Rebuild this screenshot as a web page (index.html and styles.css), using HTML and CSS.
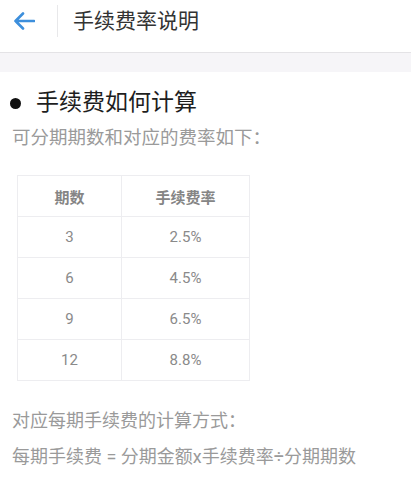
FILE: index.html
```html
<!DOCTYPE html>
<html lang="zh-CN">
<head>
  <meta charset="UTF-8" />
  <meta name="viewport" content="width=device-width, initial-scale=1.0" />
  <title>手续费率说明</title>
  <link rel="stylesheet" href="styles.css">
</head>
<body>
  <!-- 顶部导航 -->
  <div class="topbar">
    <span class="back">
      <svg width="22" height="18" viewBox="0 0 22 18">
        <path d="M21 9H2.5M10 1.5L2.5 9l7.5 7.5" fill="none" stroke="#3d8fdc" stroke-width="2.6" stroke-linecap="round" stroke-linejoin="round"/>
      </svg>
    </span>
    <span class="divider"></span>
    <span class="title">手续费率说明</span>
  </div>
  <div class="band"></div>

  <div class="content">
    <h2 class="heading"><span class="dot"></span>手续费如何计算</h2>
    <p class="desc">可分期期数和对应的费率如下：</p>

    <table class="rates">
      <tr><th>期数</th><th>手续费率</th></tr>
      <tr><td>3</td><td>2.5%</td></tr>
      <tr><td>6</td><td>4.5%</td></tr>
      <tr><td>9</td><td>6.5%</td></tr>
      <tr><td>12</td><td>8.8%</td></tr>
    </table>

    <p class="desc formula-label">对应每期手续费的计算方式：</p>
    <p class="desc formula">每期手续费 = 分期金额x手续费率÷分期期数</p>
  </div>
</body>
</html>
```

FILE: styles.css
```css
body {
  margin: 0;
  font-family: Roboto, "Noto Sans CJK SC", sans-serif;
  background: #fff;
  color: #222;
}

/* 顶部导航 */
.topbar {
  display: flex;
  align-items: center;
  height: 42px;
  padding-bottom: 10px;
  border-bottom: 1px solid #e4e3e6;
}
.back {
  display: flex;
  margin-left: 13px;
  width: 22px;
}
.divider {
  width: 1px;
  height: 32px;
  background: #e8e8ea;
  margin-left: 22px;
}
.title {
  margin-left: 15px;
  font-size: 21px;
  color: #333;
  line-height: 28px;
}
.band {
  height: 19px;
  background: #f6f5f8;
}

.content {
  padding: 0 12px;
}
.heading {
  display: flex;
  align-items: center;
  margin: 16px 0 0 -2px;
  font-size: 23px;
  font-weight: normal;
  line-height: 30px;
  color: #1e1e1e;
}
.dot {
  width: 11px;
  height: 11px;
  border-radius: 50%;
  background: #111;
  margin-right: 15px;
}
.desc {
  margin: 7px 0 0;
  font-size: 18.5px;
  line-height: 26px;
  color: #9a9a9a;
}

/* 费率表 */
.rates {
  margin: 24px 0 0 5px;
  border-collapse: collapse;
  width: 233px;
  font-size: 15px;
  color: #8a8a8a;
}
.rates th, .rates td {
  border: 1px solid #ededf0;
  height: 40px;
  padding: 0;
  text-align: center;
}
.rates th {
  font-weight: bold;
  color: #858585;
}
.rates th:first-child {
  width: 103px;
}

.formula-label {
  margin-top: 27px;
  font-size: 18px;
}
.formula {
  margin-top: 10px;
  font-size: 18px;
}
```
